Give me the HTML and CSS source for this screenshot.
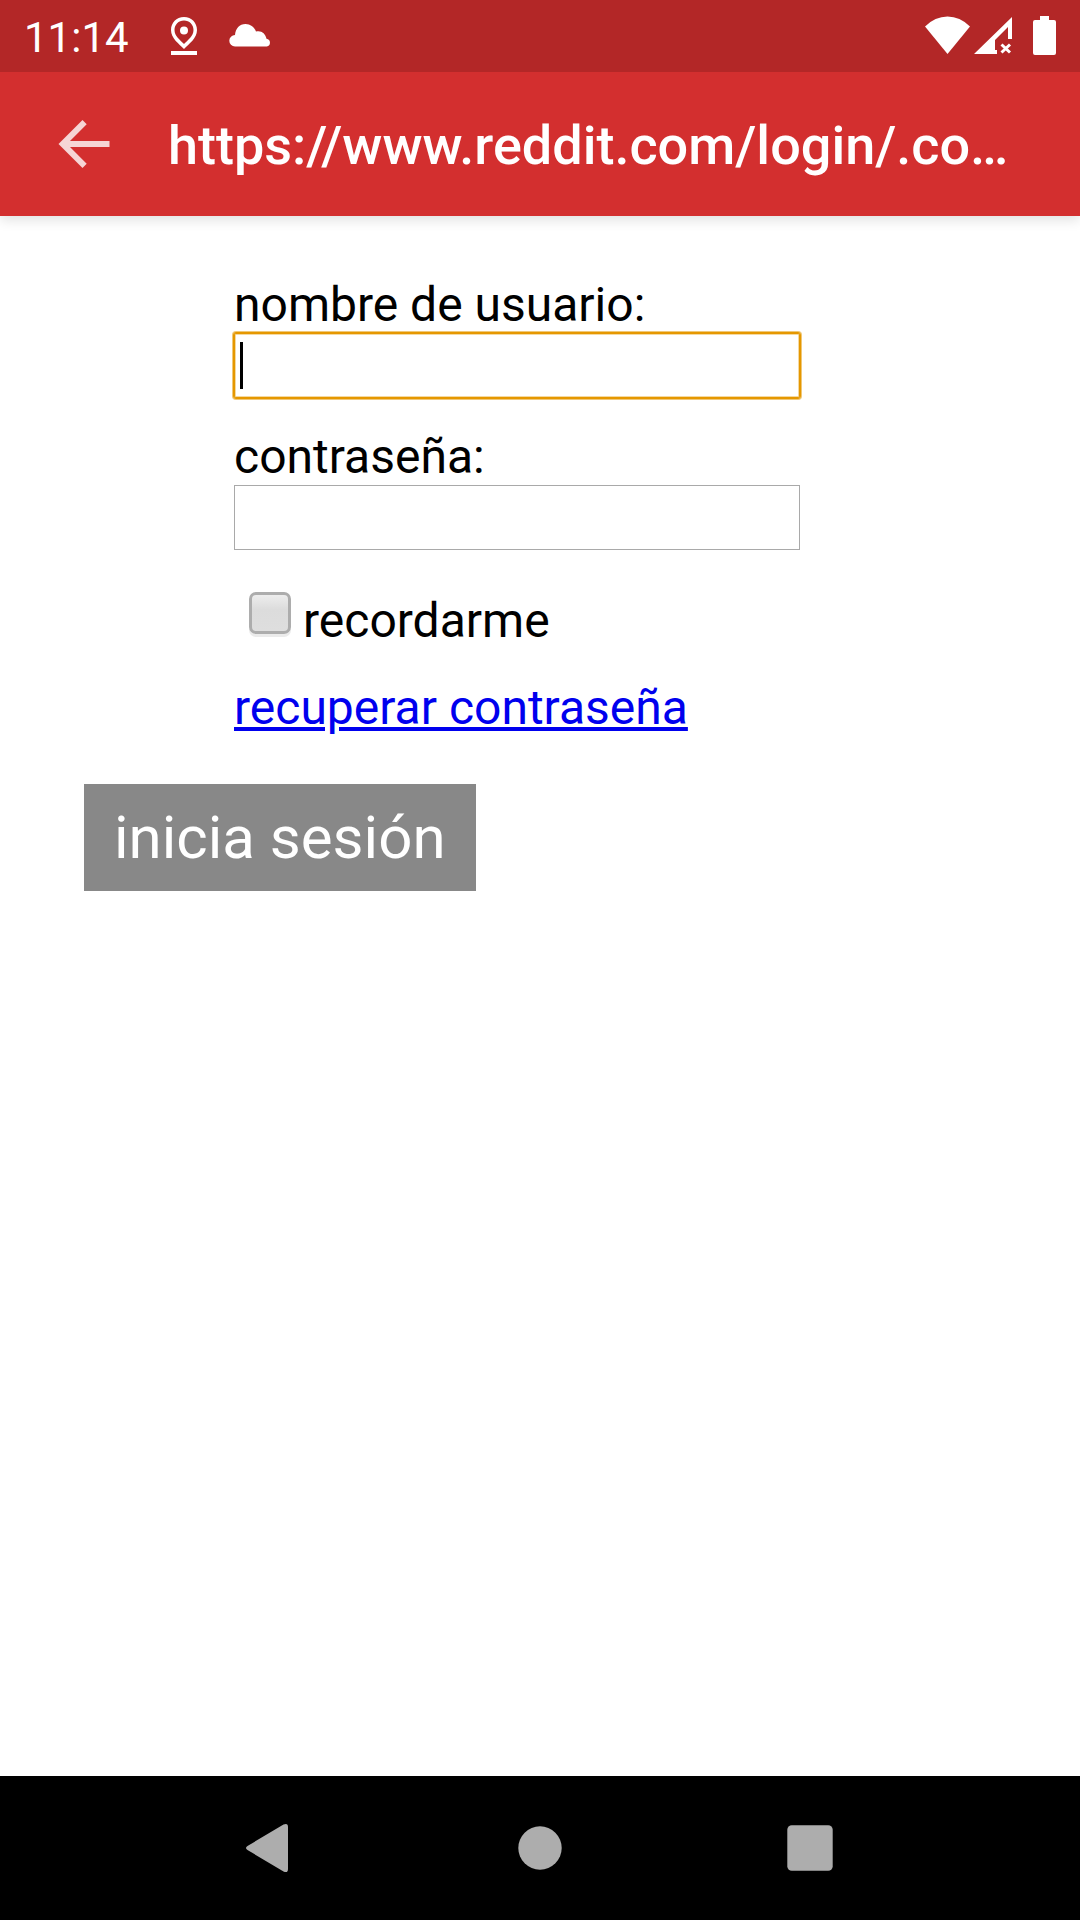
FILE: index.html
```html
<!DOCTYPE html>
<html lang="es">
<head>
<meta charset="utf-8">
<meta name="viewport" content="width=device-width, initial-scale=1">
<title>Iniciar sesión</title>
<link rel="stylesheet" href="styles.css">
</head>
<body>
<div class="status-bar">
  <span class="clock">11:14</span>
  <svg class="status-icon pin" width="28" height="40" viewBox="0 0 28 40" aria-hidden="true">
    <path fill-rule="evenodd" d="M14 1C6.300 1 1 6.800 1 14c0 8.500 7.800 13.500 13 19 5.200-5.500 13-10.500 13-19C27 6.800 21.700 1 14 1zM14 4.500c5.500 0 9.500 4.200 9.500 9.500 0 6-5.500 9.800-9.500 14-4-4.200-9.500-8-9.500-14 0-5.300 4-9.500 9.500-9.500z"/>
    <circle cx="14" cy="14.500" r="4"/>
    <rect x="1" y="35" width="26" height="4"/>
  </svg>
  <svg class="status-icon cloud" width="42" height="26" viewBox="0 0 42 26" aria-hidden="true">
    <path d="M6 23.500a5.700 5.700 0 0 1 0-11.400C6.500 5.500 10.500 1 16.500 1c4.800 0 8.500 2.800 10.500 7.500 5-1.500 9.500 1.800 10.500 7.300a3.900 3.900 0 0 1 .3 7.700z"/>
  </svg>
  <div class="status-right">
    <svg class="status-icon wifi" width="45" height="40" viewBox="0 0 45 40" aria-hidden="true">
      <path d="M22.500 38L0 10.500Q10 .5 22.500 .5T45 10.500z"/>
    </svg>
    <svg class="status-icon signal" width="39" height="40" viewBox="0 0 39 40" aria-hidden="true">
      <path d="M38 1v22h-4V11L21 24v10h2v4H0z"/>
      <path class="signal-cross" d="M27.500 28.500l8.500 8M36 28.500l-8.500 8"/>
    </svg>
    <svg class="status-icon battery" width="23" height="40" viewBox="0 0 23 40" aria-hidden="true">
      <path d="M7 0h9v4h5a2 2 0 0 1 2 2v31a2 2 0 0 1-2 2H2a2 2 0 0 1-2-2V6a2 2 0 0 1 2-2h5z"/>
    </svg>
  </div>
</div>
<header class="app-bar">
  <button class="back" type="button" aria-label="Atrás">
    <svg width="52" height="48" viewBox="0 0 52 48" aria-hidden="true">
      <path d="M.5 24L24.500 0l4.200 4.200L12 21h39.500v6H12l16.700 16.800L24.500 48z"/>
    </svg>
  </button>
  <h1 class="title">https://www.reddit.com/login/.co…</h1>
</header>
<main class="content">
  <form class="login">
    <div class="fields">
      <div class="field">
        <label for="user">nombre de usuario:</label>
        <input class="text-box focused" id="user" name="user" type="text">
      </div>
      <div class="field">
        <label for="passwd">contraseña:</label>
        <input class="text-box" id="passwd" name="passwd" type="password">
      </div>
      <div class="remember">
        <input class="check" id="rem" name="rem" type="checkbox">
        <label for="rem">recordarme</label>
      </div>
      <a class="recover" href="#recuperar">recuperar contraseña</a>
    </div>
    <button class="submit" type="submit">inicia sesión</button>
  </form>
</main>
<nav class="nav-bar">
  <button class="nav-button" type="button" aria-label="Volver">
    <svg width="72" height="72" viewBox="0 0 72 72" aria-hidden="true"><path d="M13.500 34L49.500 12.500Q54 10.500 54 15v42q0 4.500-4.500 2.500L13.500 38Q10.500 36 13.500 34z"/></svg>
  </button>
  <button class="nav-button" type="button" aria-label="Inicio">
    <svg width="72" height="72" viewBox="0 0 72 72" aria-hidden="true"><circle cx="36" cy="36" r="21.700"/></svg>
  </button>
  <button class="nav-button" type="button" aria-label="Recientes">
    <svg width="72" height="72" viewBox="0 0 72 72" aria-hidden="true"><rect x="13.300" y="13.300" width="45.400" height="45.400" rx="4.500"/></svg>
  </button>
</nav>
</body>
</html>
```
FILE: styles.css
```css
* {
  box-sizing: border-box;
}

body {
  margin: 0;
  min-height: 100vh;
  display: flex;
  flex-direction: column;
  background: #fff;
  color: #000;
  font-family: Roboto, sans-serif;
  font-size: 48px;
  line-height: 56px;
}

button {
  font: inherit;
  border: 0;
  padding: 0;
  border-radius: 0;
  background: none;
}

svg {
  display: block;
}

.status-bar {
  position: relative;
  z-index: 1;
  height: 72px;
  padding: 0 24px;
  display: flex;
  align-items: center;
  background: #b32727;
  color: #fff;
}

.clock {
  padding-top: 4px;
  font-size: 42px;
  line-height: 48px;
}

.status-icon {
  flex: none;
  fill: #fff;
}

.pin {
  margin-left: 41px;
}

.cloud {
  margin-left: 31px;
}

.status-right {
  margin-left: auto;
  display: flex;
  align-items: center;
}

.signal {
  margin-left: 4px;
}

.battery {
  margin-left: 20px;
}

.signal-cross {
  fill: none;
  stroke: #fff;
  stroke-width: 3;
}

.app-bar {
  min-height: 144px;
  padding-right: 24px;
  display: flex;
  align-items: center;
  background: #d32f2f;
  color: #fff;
  box-shadow: 0 4px 12px rgba(0, 0, 0, 0.12);
}

.back {
  flex: none;
  width: 168px;
  height: 144px;
  display: flex;
  align-items: center;
  padding-left: 58px;
}

.back svg {
  fill: #f6d5d5;
}

.title {
  flex: 1;
  min-width: 0;
  margin: 0;
  padding-top: 4px;
  font-size: 54px;
  line-height: 64px;
  font-weight: 500;
  white-space: nowrap;
  overflow: hidden;
  text-overflow: ellipsis;
}

.content {
  flex: 1;
  padding: 61px 84px;
}

.login {
  display: flex;
  flex-direction: column;
  align-items: flex-start;
  gap: 48px;
}

.fields {
  width: 100%;
  max-width: 716px;
  padding-left: 150px;
  display: flex;
  flex-direction: column;
  align-items: flex-start;
  gap: 31px;
}

.field {
  width: 100%;
  display: flex;
  flex-direction: column;
}

.text-box {
  width: 100%;
  height: 65px;
  padding: 4px 6px;
  border: 1px solid #a9a9a9;
  border-radius: 0;
  background: #fff;
  font: inherit;
}

/* Active field: amber ring and a thick insertion caret */
.focused {
  border-color: #e59700;
  border-radius: 2px;
  outline: 1px solid #e59700;
  box-shadow: 0 0 0 2px #f0c878, inset 0 0 0 1px #f5d9a0;
  caret-color: transparent;
  background: linear-gradient(#000, #000) 5px center / 3px 47px no-repeat #fff;
}

.remember {
  display: flex;
  align-items: flex-start;
  gap: 12px;
  padding: 11px 0 0 15px;
}

.remember label {
  padding-top: 1px;
}

.check {
  appearance: none;
  width: 42px;
  height: 42px;
  margin: 0;
  border: 3px solid #adadad;
  border-radius: 7px;
  background: linear-gradient(#ededed, #dcdcdc 40%, #dedede);
  box-shadow: 0 3px 0 #ebebeb;
}

.recover {
  color: #00e;
  text-decoration: underline;
}

.submit {
  padding: 19px 30px 18px;
  background: #888;
  color: #fff;
  font-size: 60px;
  line-height: 70px;
}

.nav-bar {
  min-height: 144px;
  display: flex;
  align-items: center;
  justify-content: center;
  gap: 198px;
  background: #000;
}

.nav-button svg {
  fill: #adadad;
}
```
